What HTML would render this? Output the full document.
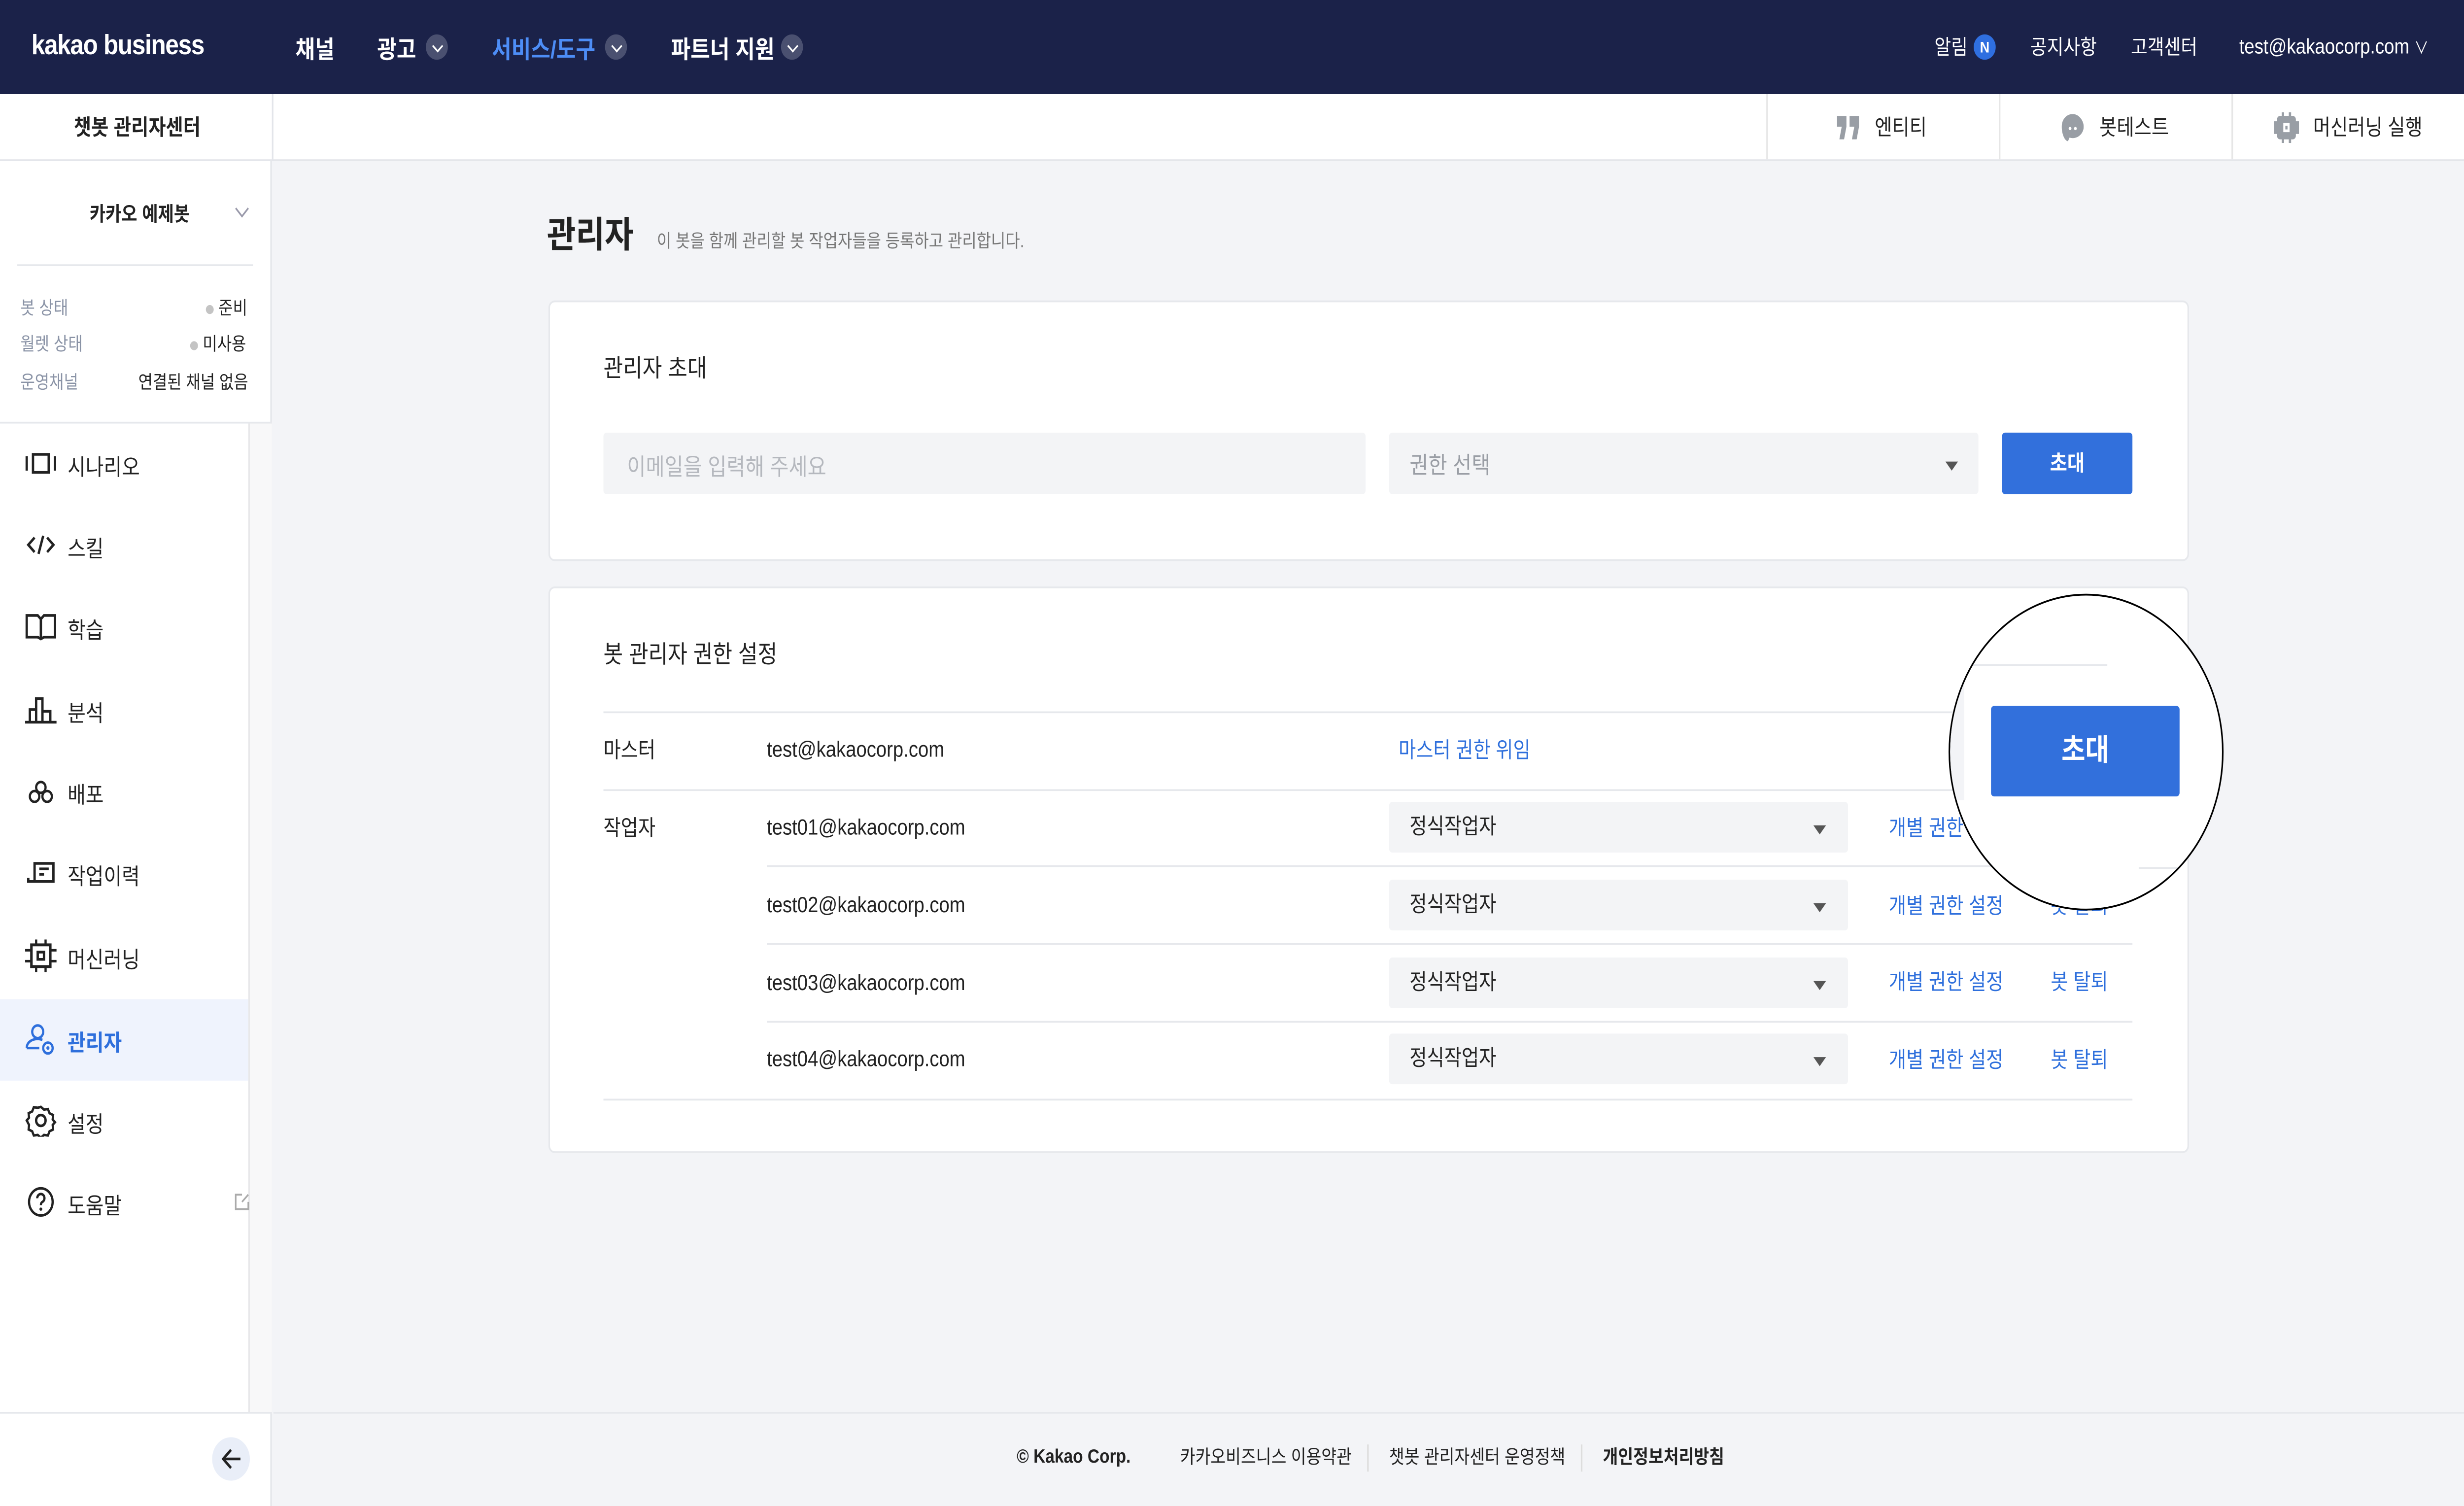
<!DOCTYPE html>
<html><head><meta charset="utf-8"><style>
*{margin:0;padding:0;box-sizing:border-box}
html,body{width:100%;height:100%;overflow:hidden;background:#f3f4f7}
#sv{position:absolute;left:0;top:0;width:100vw;height:100vh;display:block}
#w{position:relative;width:1568px;height:832px;font-family:"Liberation Sans","Noto Sans CJK KR",sans-serif;color:#222;background:#f3f4f7;overflow:hidden}
.a{position:absolute;white-space:nowrap}
.t{transform:translateY(-50%)}
.chev{position:absolute;width:14px;height:14px;border-radius:50%;background:#4a5070;top:19px}
.chev:after{content:"";position:absolute;left:4.5px;top:3.5px;width:4px;height:4px;border-right:1.3px solid #fff;border-bottom:1.3px solid #fff;transform:rotate(45deg)}
.nav{font-size:13.5px;color:#fff;font-weight:bold;top:26px}
.hr{font-size:11.5px;color:#fff;top:26px}
.mi{position:absolute;left:0;width:158px;height:45px}
.mi svg{position:absolute;left:16px;top:13px}
.mi span{position:absolute;left:43px;top:50%;transform:translateY(-50%);font-size:12.5px}
.card{position:absolute;left:349px;width:1044px;background:#fff;border:1px solid #e6e8ec;border-radius:4px}
.sel{position:absolute;background:#f3f4f6;border-radius:2px}
.caret{position:absolute;width:0;height:0;border-left:4.5px solid transparent;border-right:4.5px solid transparent;border-top:5px solid #555}
.line{position:absolute;height:1px;background:#e6e8ec}
.blue{color:#2e6fdc}
</style></head><body>
<svg id="sv" viewBox="0 0 1568 832" preserveAspectRatio="none" xmlns="http://www.w3.org/2000/svg"><foreignObject x="0" y="0" width="1568" height="832"><div xmlns="http://www.w3.org/1999/xhtml" id="w">
<div class="a" style="left:0;top:0;width:1568px;height:52px;background:#1b2249"></div>
<div class="a t" style="left:20px;top:26px;font-size:15.5px;font-weight:bold;color:#fff;letter-spacing:-0.4px">kakao business</div>
<div class="a t nav" style="left:188px">채널</div>
<div class="a t nav" style="left:240px">광고</div><div class="chev" style="left:271px"></div>
<div class="a t nav" style="left:313px;color:#4d8df6">서비스/도구</div><div class="chev" style="left:385px"></div>
<div class="a t nav" style="left:427px">파트너 지원</div><div class="chev" style="left:497px"></div>
<div class="a t hr" style="left:1231px">알림</div>
<div class="a" style="left:1256px;top:19px;width:14px;height:14px;border-radius:50%;background:#2f6fe0;color:#fff;font-size:8.5px;font-weight:bold;text-align:center;line-height:14px">N</div>
<div class="a t hr" style="left:1292px">공지사항</div>
<div class="a t hr" style="left:1356px">고객센터</div>
<div class="a t hr" style="left:1425px">test@kakaocorp.com <span style="font-size:9px">∨</span></div>
<div class="a" style="left:0;top:52px;width:1568px;height:37px;background:#fff;border-bottom:1px solid #e3e5ea"></div>
<div class="a" style="left:173px;top:52px;width:1px;height:37px;background:#e3e5ea"></div>
<div class="a t" style="left:47px;top:70px;font-size:12px;font-weight:bold">챗봇 관리자센터</div>
<div class="a" style="left:1124px;top:52px;width:1px;height:36px;background:#e6e6e6"></div>
<div class="a" style="left:1272px;top:52px;width:1px;height:36px;background:#e6e6e6"></div>
<div class="a" style="left:1420px;top:52px;width:1px;height:36px;background:#e6e6e6"></div>
<svg class="a" style="left:1169px;top:64px" width="14" height="13" viewBox="0 0 14 13"><path d="M0 0h6v6l-1.5 7h-3l1.5-7H0zM8 0h6v6l-1.5 7h-3l1.5-7H8z" fill="#999ea5"/></svg>
<div class="a t" style="left:1193px;top:70px;font-size:12px">엔티티</div>
<svg class="a" style="left:1312px;top:63px" width="14" height="15" viewBox="0 0 14 15"><path d="M7 0C3 0 0 3 0 7c0 4 2 8 4 8l1-2c1 .3 1.5.3 2 .3 4 0 7-3 7-6.3S11 0 7 0z" fill="#999ea5"/><circle cx="5.3" cy="8" r=".9" fill="#fff"/><circle cx="8.7" cy="8" r=".9" fill="#fff"/></svg>
<div class="a t" style="left:1336px;top:70px;font-size:12px">봇테스트</div>
<svg class="a" style="left:1447px;top:62px" width="16" height="17" viewBox="0 0 16 17"><rect x="2" y="2" width="12" height="13" rx="2" fill="#999ea5"/><rect x="0" y="5" width="16" height="7" fill="#999ea5"/><rect x="5" y="0" width="1.5" height="17" fill="#999ea5"/><rect x="9.5" y="0" width="1.5" height="17" fill="#999ea5"/><rect x="6" y="6" width="4" height="5" fill="#fff"/><rect x="7.3" y="7.5" width="1.4" height="2" fill="#999ea5"/></svg>
<div class="a t" style="left:1472px;top:70px;font-size:12px">머신러닝 실행</div>
<div class="a" style="left:0;top:89px;width:173px;height:743px;background:#fff;border-right:1px solid #e3e5ea"></div>
<div class="a" style="left:158px;top:234px;width:15px;height:546px;background:#f8f8f9;border-left:1px solid #e8e8ea"></div>
<div class="a t" style="left:57px;top:118px;font-size:11px;font-weight:bold">카카오 예제봇</div>
<svg class="a" style="left:149px;top:114px" width="10" height="7" viewBox="0 0 10 7"><path d="M1 1l4 4.5L9 1" fill="none" stroke="#99a" stroke-width="1"/></svg>
<div class="line" style="left:11px;top:146px;width:150px"></div>
<div class="a t" style="left:13px;top:169px;font-size:10px;color:#8a93a6">봇 상태</div>
<div class="a t" style="left:131px;top:169px;font-size:10px"><span style="display:inline-block;width:5px;height:5px;border-radius:50%;background:#c4c4c4;margin-right:3px;vertical-align:middle"></span>준비</div>
<div class="a t" style="left:13px;top:189px;font-size:10px;color:#8a93a6">월렛 상태</div>
<div class="a t" style="left:121px;top:189px;font-size:10px"><span style="display:inline-block;width:5px;height:5px;border-radius:50%;background:#c4c4c4;margin-right:3px;vertical-align:middle"></span>미사용</div>
<div class="a t" style="left:13px;top:210px;font-size:10px;color:#8a93a6">운영채널</div>
<div class="a t" style="left:88px;top:210px;font-size:10px">연결된 채널 없음</div>
<div class="line" style="left:0;top:233px;width:173px"></div>
<div class="mi" style="top:234px"><svg width="20" height="18" viewBox="0 0 20 18"><path d="M1 5v8M19 5v8M5 4h10v10H5z" fill="none" stroke="#222" stroke-width="1.5"/></svg><span>시나리오</span></div>
<div class="mi" style="top:279px"><svg width="20" height="18" viewBox="0 0 20 18"><path d="M6 5L2 9l4 4M14 5l4 4-4 4M11.5 4l-3 10" fill="none" stroke="#222" stroke-width="1.5"/></svg><span>스킬</span></div>
<div class="mi" style="top:324px"><svg width="20" height="18" viewBox="0 0 20 18"><path d="M1 3h7l2 2 2-2h7v12h-7l-2 1-2-1H1zM10 5v11" fill="none" stroke="#222" stroke-width="1.5"/></svg><span>학습</span></div>
<div class="mi" style="top:370px"><svg width="20" height="18" viewBox="0 0 20 18"><path d="M0 16h20M3 16V9h4v7M7 16V3h4v13M11 16v-6h5v6" fill="none" stroke="#222" stroke-width="1.5"/></svg><span>분석</span></div>
<div class="mi" style="top:415px"><svg width="20" height="18" viewBox="0 0 20 18"><circle cx="10" cy="7" r="3" fill="none" stroke="#222" stroke-width="1.4"/><circle cx="6" cy="12" r="3" fill="none" stroke="#222" stroke-width="1.4"/><circle cx="14" cy="12" r="3" fill="none" stroke="#222" stroke-width="1.4"/></svg><span>배포</span></div>
<div class="mi" style="top:460px"><svg width="20" height="18" viewBox="0 0 20 18"><path d="M6 14V4h12v10H2v-2M9 7h6M9 10h3" fill="none" stroke="#222" stroke-width="1.5"/></svg><span>작업이력</span></div>
<div class="mi" style="top:506px"><svg width="20" height="18" viewBox="0 0 20 18"><rect x="4" y="3" width="12" height="12" fill="none" stroke="#222" stroke-width="1.6"/><rect x="8" y="7" width="4" height="4" fill="none" stroke="#222" stroke-width="1.5"/><path d="M0 6h4M0 12h4M16 6h4M16 12h4M7 0v3M13 0v3M7 15v3M13 15v3" stroke="#222" stroke-width="1.4"/></svg><span>머신러닝</span></div>
<div class="mi" style="top:552px;background:#eff3fd"><svg width="20" height="18" viewBox="0 0 20 18"><circle cx="8" cy="5" r="3.5" fill="none" stroke="#2e6fdc" stroke-width="1.4"/><path d="M1 14c0-3 3-5 7-5 1 0 2 .2 3 .5M1 14h8" fill="none" stroke="#2e6fdc" stroke-width="1.4"/><circle cx="14.5" cy="14" r="3" fill="none" stroke="#2e6fdc" stroke-width="1.4"/><circle cx="14.5" cy="14" r="1" fill="#2e6fdc"/></svg><span class="blue" style="font-weight:bold">관리자</span></div>
<div class="mi" style="top:597px"><svg width="20" height="18" viewBox="0 0 20 18"><path d="M10 1.5l2 1.5 2.5-.3 1 2.3 2.3 1-.3 2.5 1.5 1.5-1.5 1.5.3 2.5-2.3 1-1 2.3-2.5-.3-2 1.5-2-1.5-2.5.3-1-2.3-2.3-1 .3-2.5L1 9l1.5-1.5-.3-2.5 2.3-1 1-2.3 2.5.3z" fill="none" stroke="#222" stroke-width="1.4"/><circle cx="10" cy="9" r="3" fill="none" stroke="#222" stroke-width="1.5"/></svg><span>설정</span></div>
<div class="mi" style="top:642px"><svg width="20" height="18" viewBox="0 0 20 18"><circle cx="10" cy="9" r="7.5" fill="none" stroke="#222" stroke-width="1.4"/><path d="M7.7 7a2.3 2.3 0 1 1 3.3 2c-.8.4-1 .9-1 1.8" fill="none" stroke="#222" stroke-width="1.4"/><circle cx="10" cy="13" r=".9" fill="#222"/></svg><span>도움말</span></div>
<svg class="a" style="left:149px;top:659px" width="10" height="10" viewBox="0 0 10 10"><path d="M5 1H1v8h8V5M5 5l4-4" fill="none" stroke="#aaa" stroke-width="1"/></svg>
<div class="line" style="left:0;top:780px;width:173px"></div>
<div class="a" style="left:135px;top:794px;width:24px;height:24px;border-radius:50%;background:#e9eef8"></div>
<svg class="a" style="left:140px;top:799px" width="14" height="14" viewBox="0 0 14 14"><path d="M13 7H2M7 2L2 7l5 5" fill="none" stroke="#222" stroke-width="1.5"/></svg>
<div class="a t" style="left:348px;top:128px;font-size:20px;font-weight:bold">관리자</div>
<div class="a t" style="left:418px;top:132px;font-size:10px;color:#777">이 봇을 함께 관리할 봇 작업자들을 등록하고 관리합니다.</div>
<div class="card" style="top:166px;height:144px"></div>
<div class="a t" style="left:384px;top:202px;font-size:13.5px">관리자 초대</div>
<div class="sel" style="left:384px;top:239px;width:485px;height:34px"></div>
<div class="a t" style="left:399px;top:257px;font-size:13px;color:#b5b8be">이메일을 입력해 주세요</div>
<div class="sel" style="left:884px;top:239px;width:375px;height:34px"></div>
<div class="a t" style="left:897px;top:256px;font-size:13px;color:#9a9ea5">권한 선택</div>
<div class="caret" style="left:1238px;top:255px"></div>
<div class="a" style="left:1274px;top:239px;width:83px;height:34px;background:#3270dc;border-radius:2px;color:#fff;font-size:12px;font-weight:bold;text-align:center;line-height:34px">초대</div>
<div class="card" style="top:324px;height:313px"></div>
<div class="a t" style="left:384px;top:360px;font-size:13.5px">봇 관리자 권한 설정</div>
<div class="line" style="left:384px;top:393px;width:973px"></div>
<div class="line" style="left:384px;top:436px;width:973px"></div>
<div class="line" style="left:488px;top:478px;width:869px"></div>
<div class="line" style="left:488px;top:521px;width:869px"></div>
<div class="line" style="left:488px;top:564px;width:869px"></div>
<div class="line" style="left:384px;top:607px;width:973px"></div>
<div class="a t" style="left:384px;top:414px;font-size:12px">마스터</div>
<div class="a t" style="left:488px;top:414px;font-size:12px">test@kakaocorp.com</div>
<div class="a t blue" style="left:890px;top:414px;font-size:12px">마스터 권한 위임</div>
<div class="a t" style="left:384px;top:457px;font-size:12px">작업자</div>
<div class="a t" style="left:488px;top:457px;font-size:12px">test01@kakaocorp.com</div>
<div class="a t" style="left:488px;top:500px;font-size:12px">test02@kakaocorp.com</div>
<div class="a t" style="left:488px;top:543px;font-size:12px">test03@kakaocorp.com</div>
<div class="a t" style="left:488px;top:585px;font-size:12px">test04@kakaocorp.com</div>
<div class="sel" style="left:884px;top:443px;width:292px;height:28px"></div>
<div class="sel" style="left:884px;top:486px;width:292px;height:28px"></div>
<div class="sel" style="left:884px;top:529px;width:292px;height:28px"></div>
<div class="sel" style="left:884px;top:571px;width:292px;height:28px"></div>
<div class="a t" style="left:897px;top:456px;font-size:12px">정식작업자</div>
<div class="a t" style="left:897px;top:499px;font-size:12px">정식작업자</div>
<div class="a t" style="left:897px;top:542px;font-size:12px">정식작업자</div>
<div class="a t" style="left:897px;top:584px;font-size:12px">정식작업자</div>
<div class="caret" style="left:1154px;top:456px"></div>
<div class="caret" style="left:1154px;top:499px"></div>
<div class="caret" style="left:1154px;top:542px"></div>
<div class="caret" style="left:1154px;top:584px"></div>
<div class="a t blue" style="left:1202px;top:457px;font-size:12px">개별 권한 설정</div>
<div class="a t blue" style="left:1202px;top:500px;font-size:12px">개별 권한 설정</div>
<div class="a t blue" style="left:1202px;top:542px;font-size:12px">개별 권한 설정</div>
<div class="a t blue" style="left:1202px;top:585px;font-size:12px">개별 권한 설정</div>
<div class="a t blue" style="left:1305px;top:500px;font-size:12px">봇 탈퇴</div>
<div class="a t blue" style="left:1305px;top:542px;font-size:12px">봇 탈퇴</div>
<div class="a t blue" style="left:1305px;top:585px;font-size:12px">봇 탈퇴</div>
<div class="a" style="left:1240px;top:328px;width:175px;height:175px;border-radius:50%;background:#fff;border:1.2px solid #000;overflow:hidden">
<div class="a" style="left:-2px;top:9px;width:11px;height:104px;background:#f3f4f7"></div>
<div class="a" style="left:0;top:38px;width:100px;height:1px;background:#e6e8ec"></div>
<div class="a" style="left:120px;top:150px;width:60px;height:1px;background:#e6e8ec"></div>
<div class="a" style="left:26px;top:61px;width:120px;height:50px;background:#3270dc;border-radius:2px;color:#fff;font-size:16.5px;font-weight:bold;text-align:center;line-height:50px">초대</div>
</div>
<div class="line" style="left:174px;top:780px;width:1394px"></div>
<div class="a t" style="left:647px;top:805px;font-size:10.5px;font-weight:bold">© Kakao Corp.</div>
<div class="a t" style="left:751px;top:805px;font-size:10.5px">카카오비즈니스 이용약관</div>
<div class="a" style="left:870px;top:798px;width:1px;height:15px;background:#ddd"></div>
<div class="a t" style="left:884px;top:805px;font-size:10.5px">챗봇 관리자센터 운영정책</div>
<div class="a" style="left:1006px;top:798px;width:1px;height:15px;background:#ddd"></div>
<div class="a t" style="left:1020px;top:805px;font-size:10.5px;font-weight:bold">개인정보처리방침</div>
</div></foreignObject></svg>
</body></html>
